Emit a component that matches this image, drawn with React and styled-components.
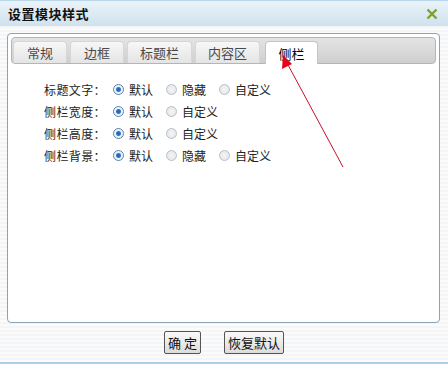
import React from 'react'
import styled, { createGlobalStyle } from 'styled-components'

const Global = createGlobalStyle`
  html, body { margin: 0; padding: 0; }
  body {
    font-family: "Noto Sans CJK SC", "DejaVu Sans", sans-serif;
    font-size: 12px;
    color: #222;
    background: #fff;
  }
`

const Dialog = styled.div`
  position: relative;
  width: 448px;
  height: 364px;
  box-sizing: border-box;
  display: flex;
  flex-direction: column;
  background: repeating-linear-gradient(to bottom, #fbfbfb 0, #fbfbfb 2px, #f4f5f6 2px, #f4f5f6 4px);
  border-bottom: 2px solid #a9d0e6;
`

const TitleBar = styled.div`
  height: 26px;
  flex: none;
  display: flex;
  align-items: center;
  justify-content: space-between;
  padding: 0 8px 0 8px;
  background: linear-gradient(to bottom, #eaf3f9, #cfe2ee);
  border-top: 1px solid #b9d6e8;
  box-sizing: border-box;
`

const Title = styled.span`
  font-size: 13px;
  font-weight: bold;
  color: #111;
  letter-spacing: 0.5px;
`

const Close = styled.svg`
  width: 12px;
  height: 12px;
  margin-right: 2px;
`

const Panel = styled.div`
  margin: 7px 8px 0 7px;
  height: 290px;
  flex: none;
  box-sizing: border-box;
  border: 1px solid #8da2b6;
  border-radius: 4px;
  background: #fff;
  padding: 3px 3px 0 3px;
`

const TabStrip = styled.div`
  height: 27px;
  box-sizing: border-box;
  display: flex;
  align-items: flex-end;
  gap: 3px;
  padding: 0 1px;
  border-radius: 4px;
  border: 1px solid #b5b5b5;
  background: linear-gradient(to bottom, #e4e4e4, #cfcfcf);
`

const Tab = styled.div`
  width: ${p => p.w}px;
  height: ${p => (p.active ? '23px' : '22px')};
  box-sizing: border-box;
  display: flex;
  align-items: center;
  justify-content: center;
  color: ${p => (p.active ? '#000' : '#4a4a4a')};
  font-size: 13px;
  border: 1px solid ${p => (p.active ? '#c4c4c4' : '#d6d6d6')};
  border-bottom: none;
  border-radius: 4px 4px 0 0;
  background: ${p => (p.active ? '#fff' : 'linear-gradient(to bottom, #f7f7f7, #e4e4e4)')};
  margin-bottom: ${p => (p.active ? '-1px' : '0')};
  margin-left: ${p => (p.active ? '2px' : '0')};
`

const Form = styled.div`
  display: flex;
  flex-direction: column;
  padding: 14px 0 0 33px;
`

const Row = styled.div`
  height: 22px;
  display: flex;
  align-items: center;
  color: #222;
  font-size: 12px;
`

const Label = styled.span`
  width: 69px;
  letter-spacing: 0.4px;
`

const Option = styled.label`
  display: flex;
  align-items: center;
  margin-right: 13px;
`

const Radio = styled.span`
  width: 11px;
  height: 11px;
  border-radius: 50%;
  box-sizing: border-box;
  margin-right: 5px;
  border: 1px solid ${p => (p.checked ? '#5d7fa8' : '#b8c0c8')};
  background: ${p =>
    p.checked
      ? 'radial-gradient(circle, #1a5fb0 0, #2f78c8 2px, #e9f0f8 3px, #f7f9fb 5px)'
      : 'radial-gradient(circle, #f4f5f6 0, #e2e4e6 6px)'};
`

const Footer = styled.div`
  flex: 1;
  display: flex;
  justify-content: center;
  align-items: flex-start;
  gap: 23px;
  padding-top: 8px;
`

const Button = styled.button`
  height: 23px;
  padding: 0 3px;
  font-family: "Noto Sans CJK SC", sans-serif;
  font-size: 13px;
  color: #111;
  border: 1px solid #555;
  border-radius: 2px;
  background: linear-gradient(to bottom, #f9f9f9, #dcdcdc);
`

const Arrow = styled.svg`
  position: absolute;
  left: 0;
  top: 0;
  width: 448px;
  height: 365px;
  pointer-events: none;
`

const rows = [
  { label: '标题文字：', opts: ['默认', '隐藏', '自定义'] },
  { label: '侧栏宽度：', opts: ['默认', '自定义'] },
  { label: '侧栏高度：', opts: ['默认', '自定义'] },
  { label: '侧栏背景：', opts: ['默认', '隐藏', '自定义'] },
]

const tabs = [
  { name: '常规', w: 54 },
  { name: '边框', w: 54 },
  { name: '标题栏', w: 65 },
  { name: '内容区', w: 65 },
  { name: '侧栏', w: 53 },
]

export default function App() {
  return (
    <>
      <Global />
      <Dialog>
        <TitleBar>
          <Title>设置模块样式</Title>
          <Close viewBox="0 0 12 12">
            <path d="M1.5 1.5 L10.5 10.5 M10.5 1.5 L1.5 10.5" stroke="#7aa329" strokeWidth="2.4" />
          </Close>
        </TitleBar>
        <Panel>
          <TabStrip>
            {tabs.map((t, i) => (
              <Tab key={t.name} w={t.w} active={i === 4}>{t.name}</Tab>
            ))}
          </TabStrip>
          <Form>
            {rows.map(r => (
              <Row key={r.label}>
                <Label>{r.label}</Label>
                {r.opts.map((o, i) => (
                  <Option key={o}>
                    <Radio checked={i === 0} />
                    {o}
                  </Option>
                ))}
              </Row>
            ))}
          </Form>
        </Panel>
        <Footer>
          <Button>确 定</Button>
          <Button>恢复默认</Button>
        </Footer>
        <Arrow viewBox="0 0 448 365">
          <line x1="343" y1="167" x2="287" y2="63" stroke="#c8102e" strokeWidth="1" />
          <polygon points="283,55 282,69 292,64" fill="#e8001c" />
        </Arrow>
      </Dialog>
    </>
  )
}
